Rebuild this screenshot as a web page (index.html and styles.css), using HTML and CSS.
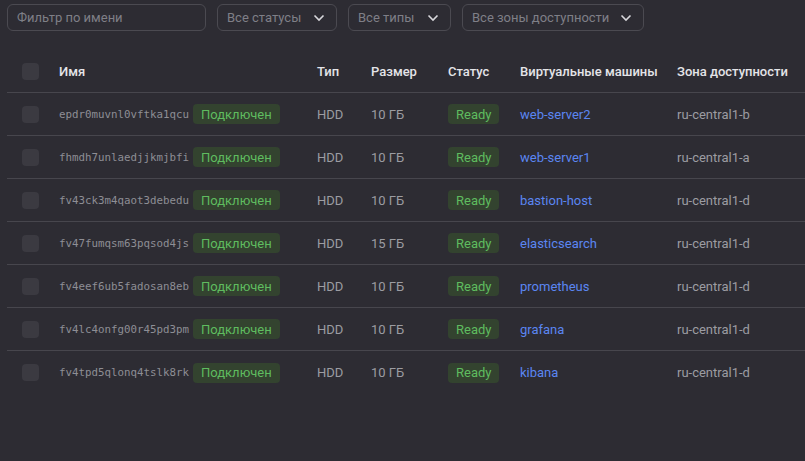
FILE: index.html
```html
<!DOCTYPE html>
<html lang="ru">
<head>
<meta charset="utf-8">
<link rel="stylesheet" href="styles.css">
</head>
<body>
<div class="page">
  <div class="filters">
    <div class="input">Фильтр по имени</div>
    <div class="select w-status"><span>Все статусы</span><svg class="chev" viewBox="0 0 12 8" width="12" height="8"><path d="M1.5 1.5 6 6l4.5-4.5" fill="none" stroke="#d8d8dc" stroke-width="1.6"/></svg></div>
    <div class="select w-type"><span>Все типы</span><svg class="chev" viewBox="0 0 12 8" width="12" height="8"><path d="M1.5 1.5 6 6l4.5-4.5" fill="none" stroke="#d8d8dc" stroke-width="1.6"/></svg></div>
    <div class="select w-zone"><span>Все зоны доступности</span><svg class="chev" viewBox="0 0 12 8" width="12" height="8"><path d="M1.5 1.5 6 6l4.5-4.5" fill="none" stroke="#d8d8dc" stroke-width="1.6"/></svg></div>
  </div>
  <div class="table">
    <div class="row head">
      <div class="cell"><span class="cb"></span></div>
      <div class="cell">Имя</div>
      <div class="cell">Тип</div>
      <div class="cell">Размер</div>
      <div class="cell">Статус</div>
      <div class="cell">Виртуальные машины</div>
      <div class="cell">Зона доступности</div>
    </div>
    <div class="row">
      <div class="cell"><span class="cb"></span></div>
      <div class="cell"><span class="id">epdr0muvnl0vftka1qcu</span><span class="badge">Подключен</span></div>
      <div class="cell">HDD</div><div class="cell">10 ГБ</div>
      <div class="cell"><span class="badge">Ready</span></div>
      <div class="cell link">web-server2</div><div class="cell">ru-central1-b</div>
    </div>
    <div class="row">
      <div class="cell"><span class="cb"></span></div>
      <div class="cell"><span class="id">fhmdh7unlaedjjkmjbfi</span><span class="badge">Подключен</span></div>
      <div class="cell">HDD</div><div class="cell">10 ГБ</div>
      <div class="cell"><span class="badge">Ready</span></div>
      <div class="cell link">web-server1</div><div class="cell">ru-central1-a</div>
    </div>
    <div class="row">
      <div class="cell"><span class="cb"></span></div>
      <div class="cell"><span class="id">fv43ck3m4qaot3debedu</span><span class="badge">Подключен</span></div>
      <div class="cell">HDD</div><div class="cell">10 ГБ</div>
      <div class="cell"><span class="badge">Ready</span></div>
      <div class="cell link">bastion-host</div><div class="cell">ru-central1-d</div>
    </div>
    <div class="row">
      <div class="cell"><span class="cb"></span></div>
      <div class="cell"><span class="id">fv47fumqsm63pqsod4js</span><span class="badge">Подключен</span></div>
      <div class="cell">HDD</div><div class="cell">15 ГБ</div>
      <div class="cell"><span class="badge">Ready</span></div>
      <div class="cell link">elasticsearch</div><div class="cell">ru-central1-d</div>
    </div>
    <div class="row">
      <div class="cell"><span class="cb"></span></div>
      <div class="cell"><span class="id">fv4eef6ub5fadosan8eb</span><span class="badge">Подключен</span></div>
      <div class="cell">HDD</div><div class="cell">10 ГБ</div>
      <div class="cell"><span class="badge">Ready</span></div>
      <div class="cell link">prometheus</div><div class="cell">ru-central1-d</div>
    </div>
    <div class="row">
      <div class="cell"><span class="cb"></span></div>
      <div class="cell"><span class="id">fv4lc4onfg00r45pd3pm</span><span class="badge">Подключен</span></div>
      <div class="cell">HDD</div><div class="cell">10 ГБ</div>
      <div class="cell"><span class="badge">Ready</span></div>
      <div class="cell link">grafana</div><div class="cell">ru-central1-d</div>
    </div>
    <div class="row last">
      <div class="cell"><span class="cb"></span></div>
      <div class="cell"><span class="id">fv4tpd5qlonq4tslk8rk</span><span class="badge">Подключен</span></div>
      <div class="cell">HDD</div><div class="cell">10 ГБ</div>
      <div class="cell"><span class="badge">Ready</span></div>
      <div class="cell link">kibana</div><div class="cell">ru-central1-d</div>
    </div>
  </div>
</div>
</body>
</html>
```
FILE: styles.css
```css
html, body {
  margin: 0;
  height: 100%;
  background: #2d2c33;
}
body {
  font-family: Roboto, "Noto Sans", sans-serif;
  font-size: 13px;
  color: #9c9ca2;
  overflow: hidden;
}
.page {
  padding: 4px 0 0 7px;
}
.filters {
  display: flex;
  gap: 11px;
  height: 27px;
}
.input, .select {
  box-sizing: border-box;
  height: 27px;
  border: 1px solid #4b4a51;
  border-radius: 6px;
  display: flex;
  align-items: center;
  font-size: 13px;
  color: #7f7f87;
}
.input {
  width: 199px;
  padding-left: 9px;
}
.select {
  padding: 0 11px 0 9px;
  justify-content: space-between;
}
.w-status { width: 120px; }
.w-type { width: 103px; }
.w-zone { width: 182px; }
.chev { display: block; }
.table {
  margin-top: 19px;
}
.row {
  box-sizing: border-box;
  display: grid;
  grid-template-columns: 52px 258px 54px 77px 72px 157px 1fr;
  height: 43px;
  align-items: center;
  border-bottom: 1px solid #47464d;
}
.row.last { border-bottom: none; }
.head {
  color: #e4e4e8;
  font-weight: 500;
}
.cell {
  display: flex;
  align-items: center;
  white-space: nowrap;
}
.cell:first-child { padding-left: 15px; }
.cb {
  width: 17px;
  height: 17px;
  border-radius: 4px;
  background: #3b3a41;
}
.id {
  font-family: "DejaVu Sans Mono", monospace;
  font-size: 10.8px;
  color: #8e8e95;
  margin-right: 4px;
}
.badge {
  display: inline-flex;
  align-items: center;
  height: 20px;
  padding: 0 8px;
  border-radius: 4px;
  background: #33432f;
  color: #5fbc5f;
}
.link { color: #5b86f2; }
```
